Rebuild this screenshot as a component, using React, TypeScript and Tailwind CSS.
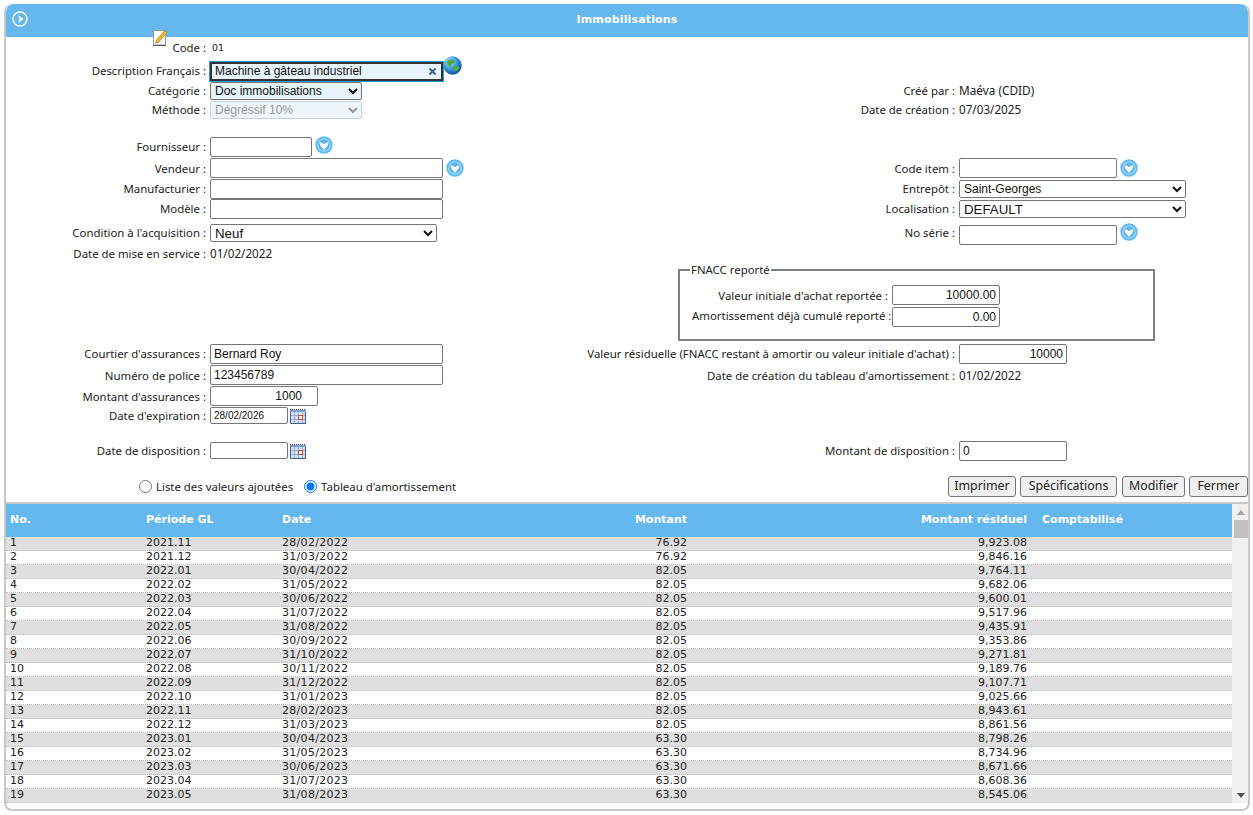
import type { ReactNode } from 'react'

const labelFont = "font-['Noto_Sans',sans-serif]"

const rows = [
  ['2021.11', '28/02/2022', '76.92', '9,923.08'],
  ['2021.12', '31/03/2022', '76.92', '9,846.16'],
  ['2022.01', '30/04/2022', '82.05', '9,764.11'],
  ['2022.02', '31/05/2022', '82.05', '9,682.06'],
  ['2022.03', '30/06/2022', '82.05', '9,600.01'],
  ['2022.04', '31/07/2022', '82.05', '9,517.96'],
  ['2022.05', '31/08/2022', '82.05', '9,435.91'],
  ['2022.06', '30/09/2022', '82.05', '9,353.86'],
  ['2022.07', '31/10/2022', '82.05', '9,271.81'],
  ['2022.08', '30/11/2022', '82.05', '9,189.76'],
  ['2022.09', '31/12/2022', '82.05', '9,107.71'],
  ['2022.10', '31/01/2023', '82.05', '9,025.66'],
  ['2022.11', '28/02/2023', '82.05', '8,943.61'],
  ['2022.12', '31/03/2023', '82.05', '8,861.56'],
  ['2023.01', '30/04/2023', '63.30', '8,798.26'],
  ['2023.02', '31/05/2023', '63.30', '8,734.96'],
  ['2023.03', '30/06/2023', '63.30', '8,671.66'],
  ['2023.04', '31/07/2023', '63.30', '8,608.36'],
  ['2023.05', '31/08/2023', '63.30', '8,545.06'],
]

function DropIcon() {
  return (
    <svg width="18" height="18" viewBox="0 0 18 18" className="shrink-0">
      <circle cx="9" cy="9" r="8.7" fill="#5fb9f2" />
      <circle cx="9" cy="9" r="6.8" fill="#a9dcf9" />
      <circle cx="9" cy="9" r="5.8" fill="#5fb4ea" />
      <path d="M4.5 6 L9 8 L13.5 6 L13 9 L9 14 L5 9 Z" fill="#fff" />
    </svg>
  )
}

function CalendarIcon() {
  return (
    <svg width="16" height="16" viewBox="0 0 16 16" className="shrink-0">
      <rect x="0" y="2" width="16" height="14" fill="#d5e2f4" />
      <path d="M0 1.5 H16" stroke="#444" strokeDasharray="1 1" />
      <rect x="0" y="2" width="16" height="2" fill="#7f9cc9" />
      <path d="M4.5 4 V15 M8.5 4 V15 M12.5 4 V15 M0 7.5 H16 M0 11.5 H16" stroke="#8fb0dc" />
      <rect x="8.5" y="7.5" width="4" height="4" fill="#fff" stroke="#d9482b" />
      <path d="M0.5 4 V15.5 H15.5 V4" fill="none" stroke="#3f5f8f" />
    </svg>
  )
}

function Row({ h, left, right }: { h: string; left?: ReactNode; right?: ReactNode }) {
  return (
    <div className={`flex ${h}`}>
      <div className="flex w-[470px] shrink-0 items-center">{left}</div>
      <div className="flex items-center">{right}</div>
    </div>
  )
}

// low: the label sits one pixel under the middle of its row
function LeftLabel({ children, low }: { children: ReactNode; low?: boolean }) {
  return (
    <span className={`mr-1 w-[200px] shrink-0 text-right whitespace-nowrap ${low ? 'pt-[2px]' : ''}`}>
      {children} :
    </span>
  )
}

function RightLabel({ children, low }: { children: ReactNode; low?: boolean }) {
  return (
    <span className={`mr-1 w-[479px] shrink-0 text-right whitespace-nowrap ${low ? 'pt-[2px]' : ''}`}>
      {children} :
    </span>
  )
}

function TextBox({ w, value, pad }: { w: string; value?: string; pad?: string }) {
  return (
    <input
      readOnly
      value={value ?? ''}
      className={`${w} h-5 shrink-0 rounded-[2px] border border-[#767676] bg-white px-[3px] text-[12px] text-[#111] outline-none font-['Liberation_Sans',sans-serif] ${pad ?? ''}`}
    />
  )
}

function Select({ w, value, tint, big }: { w: string; value: string; tint?: boolean; big?: boolean }) {
  return (
    <select
      value={value}
      onChange={() => {}}
      className={`${w} h-[18px] shrink-0 rounded-[2px] border border-[#767676] text-[#111] font-['Liberation_Sans',sans-serif] ${big ? 'text-[13.3px]' : 'text-[12px]'} ${tint ? 'bg-[#e8f4fc]' : 'bg-white'}`}
    >
      <option>{value}</option>
    </select>
  )
}

function ActionButton({ w, children }: { w: string; children: ReactNode }) {
  return (
    <button className={`${w} h-[21px] rounded-[3px] border border-[#767676] bg-[#efefef] text-[12.4px] text-[#222]`}>
      {children}
    </button>
  )
}

export default function App() {
  return (
    <div className={`h-[815px] overflow-hidden bg-white pt-1 pl-1 text-[11.4px] text-[#222] ${labelFont}`}>
      <div className="h-[807px] w-[1246px] overflow-hidden rounded-[8px] border-2 border-t-0 border-[#c8c8c8]">
        <div className="flex h-[33px] items-center rounded-t-[8px] bg-[#65b8ee] pl-[6px]">
          <svg width="16" height="16" viewBox="0 0 16 16" className="mt-[-3px] shrink-0">
            <circle cx="8" cy="8" r="7" fill="none" stroke="#fff" strokeWidth="1.3" />
            <path d="M6 4 L11.5 8 L6 12 L7.5 8 Z" fill="#fff" />
          </svg>
          <span className="flex-1 pr-[22px] text-center text-[11px] font-bold tracking-[0.15px] text-white font-['DejaVu_Sans',sans-serif]">
            Immobilisations
          </span>
        </div>

        <Row
          h="h-[22px]"
          left={
            <>
              <span className="relative mr-1 w-[200px] shrink-0 text-right">
                <svg width="15" height="16" viewBox="0 0 15 16" className="absolute top-[-9px] left-[147px]">
                  <rect x="0.5" y="0.5" width="12" height="14.5" fill="#fff" stroke="#9a9a9a" />
                  <path d="M0 15.5 H13" stroke="#555" />
                  <path d="M3.5 10 L11.5 0.5 L14 2.5 L5.5 12.5 L2.5 13 Z" fill="#efb92f" stroke="#a67a18" strokeWidth="0.6" />
                </svg>
                Code :
              </span>
              <span className="ml-[2px] text-[9.5px] font-['DejaVu_Sans',sans-serif]">01</span>
            </>
          }
        />
        <Row
          h="h-[23px]"
          left={
            <>
              <LeftLabel>Description Français</LeftLabel>
              <span className="mt-[2px] flex h-[19px] w-[233px] shrink-0 items-center justify-between border-2 border-[#333] bg-[#e8f4fc] pr-[4px] pb-[2px] pl-[3px] text-[12px] text-[#111] outline-1 outline-[#2b9be8] font-['Liberation_Sans',sans-serif]">
                Machine à gâteau industriel
                <svg width="9" height="9" viewBox="0 0 9 9" className="mt-[2px]">
                  <path d="M1.5 1.5 L7.5 7.5 M7.5 1.5 L1.5 7.5" stroke="#3f5f8f" strokeWidth="2" />
                </svg>
              </span>
              <svg width="19" height="19" viewBox="0 0 20 20" className="mb-[10px] shrink-0">
                <defs>
                  <radialGradient id="globe" cx="0.35" cy="0.3" r="0.8">
                    <stop offset="0" stopColor="#bfeaff" />
                    <stop offset="0.45" stopColor="#3d9ee0" />
                    <stop offset="1" stopColor="#0d3f8a" />
                  </radialGradient>
                </defs>
                <circle cx="10" cy="10" r="9.7" fill="url(#globe)" />
                <path d="M4 6 C6 3 10 3 12 5 C13 7 10 8 9 9 C9 11 7 12 6 10 C5 9 4 8 4 6 Z M11 11 C14 10 17 10 17 13 C15 16 13 17 12 16 C12 14 10 13 11 11 Z" fill="#4fae3c" />
              </svg>
            </>
          }
        />
        <Row
          h="h-[18px]"
          left={
            <>
              <LeftLabel>Catégorie</LeftLabel>
              <Select w="w-[152px]" value="Doc immobilisations" tint />
            </>
          }
          right={
            <>
              <RightLabel>Créé par</RightLabel>
              <span className="text-[11.8px]">Maéva (CDID)</span>
            </>
          }
        />
        <Row
          h="h-[20px]"
          left={
            <>
              <LeftLabel>Méthode</LeftLabel>
              <select
                disabled
                className="h-[18px] w-[152px] shrink-0 rounded-[2px] border border-[#c5d3dd] bg-[#eef6fb] text-[12px] text-[#999] font-['Liberation_Sans',sans-serif]"
              >
                <option>Dégréssif 10%</option>
              </select>
            </>
          }
          right={
            <>
              <RightLabel>Date de création</RightLabel>
              <span className="text-[11.7px]">07/03/2025</span>
            </>
          }
        />
        <div className="h-[16px]" />
        <Row
          h="h-[22px]"
          left={
            <>
              <LeftLabel>Fournisseur</LeftLabel>
              <TextBox w="w-[102px]" />
              <span className="mb-[5px] ml-[3px]"><DropIcon /></span>
            </>
          }
        />
        <Row
          h="h-[20px]"
          left={
            <>
              <LeftLabel low>Vendeur</LeftLabel>
              <TextBox w="w-[233px]" />
              <span className="ml-[3px]"><DropIcon /></span>
            </>
          }
          right={
            <>
              <RightLabel low>Code item</RightLabel>
              <TextBox w="w-[158px]" />
              <span className="ml-[3px]"><DropIcon /></span>
            </>
          }
        />
        <Row
          h="h-[21px]"
          left={
            <>
              <LeftLabel>Manufacturier</LeftLabel>
              <TextBox w="w-[233px]" />
            </>
          }
          right={
            <>
              <RightLabel>Entrepôt</RightLabel>
              <Select w="w-[227px]" value="Saint-Georges" />
            </>
          }
        />
        <Row
          h="h-[20px]"
          left={
            <>
              <LeftLabel>Modèle</LeftLabel>
              <TextBox w="w-[233px]" />
            </>
          }
          right={
            <>
              <RightLabel>Localisation</RightLabel>
              <Select w="w-[227px]" value="DEFAULT" big />
            </>
          }
        />
        <Row
          h="h-[27px]"
          left={
            <>
              <LeftLabel>Condition à l'acquisition</LeftLabel>
              <Select w="w-[227px]" value="Neuf" big />
            </>
          }
          right={
            <>
              <RightLabel>No série</RightLabel>
              <TextBox w="mt-[4px] w-[158px]" />
              <span className="mb-[1px] ml-[3px]"><DropIcon /></span>
            </>
          }
        />
        <Row
          h="h-[17px] pb-[2px]"
          left={
            <>
              <LeftLabel>Date de mise en service</LeftLabel>
              <span className="text-[11.7px]">01/02/2022</span>
            </>
          }
        />

        <fieldset className="mt-[-2px] ml-[672px] h-[80px] w-[477px] border-2 border-[#808080] pt-[6px] pl-[12px]">
          <legend className="ml-[-2px] px-[1px] text-[11.4px]">FNACC reporté</legend>
          <div className="flex h-[22px] items-center">
            <span className="mr-1 w-[196px] text-right whitespace-nowrap">Valeur initiale d'achat reportée :</span>
            <TextBox w="w-[108px]" value="10000.00" pad="text-right" />
          </div>
          <div className="flex h-[22px] items-center">
            <span className="mr-1 w-[196px] pb-[3px] text-right whitespace-nowrap">Amortissement déjà cumulé reporté :</span>
            <TextBox w="w-[108px]" value="0.00" pad="text-right" />
          </div>
        </fieldset>

        <div className="h-[2px]" />
        <Row
          h="h-[21px]"
          left={
            <>
              <LeftLabel>Courtier d'assurances</LeftLabel>
              <TextBox w="w-[233px]" value="Bernard Roy" />
            </>
          }
          right={
            <>
              <RightLabel>Valeur résiduelle (FNACC restant à amortir ou valeur initiale d'achat)</RightLabel>
              <TextBox w="w-[108px]" value="10000" pad="text-right" />
            </>
          }
        />
        <Row
          h="h-[21px]"
          left={
            <>
              <LeftLabel low>Numéro de police</LeftLabel>
              <TextBox w="w-[233px]" value="123456789" />
            </>
          }
          right={
            <>
              <RightLabel low>Date de création du tableau d'amortissement</RightLabel>
              <span className="pt-[2px] text-[11.7px]">01/02/2022</span>
            </>
          }
        />
        <Row
          h="h-[21px]"
          left={
            <>
              <LeftLabel low>Montant d'assurances</LeftLabel>
              <TextBox w="w-[108px]" value="1000" pad="pr-[15px] text-right" />
            </>
          }
        />
        <Row
          h="h-[19px]"
          left={
            <>
              <LeftLabel>Date d'expiration</LeftLabel>
              <span className="flex h-[17px] w-[78px] shrink-0 items-center rounded-[2px] border border-[#767676] pl-[3px] text-[10px] text-[#111] font-['Liberation_Sans',sans-serif]">
                28/02/2026
              </span>
              <span className="ml-[2px]"><CalendarIcon /></span>
            </>
          }
        />
        <div className="h-[16px]" />
        <Row
          h="h-[19px]"
          left={
            <>
              <LeftLabel>Date de disposition</LeftLabel>
              <span className="h-[17px] w-[78px] shrink-0 rounded-[2px] border border-[#767676]" />
              <span className="ml-[2px]"><CalendarIcon /></span>
            </>
          }
          right={
            <>
              <RightLabel>Montant de disposition</RightLabel>
              <TextBox w="w-[108px]" value="0" />
            </>
          }
        />
        <div className="h-[15px]" />

        <div className="flex h-[22px] items-center">
          <label className="ml-[133px] flex items-center pt-[2px]">
            <input type="radio" readOnly name="vue" className="mr-[4px] size-[13px]" />
            Liste des valeurs ajoutées
          </label>
          <label className="ml-[11px] flex items-center pt-[2px]">
            <input type="radio" readOnly checked name="vue" className="mr-[4px] size-[13px]" />
            Tableau d'amortissement
          </label>
          <div className="ml-auto flex gap-1">
            <ActionButton w="w-[68px]">Imprimer</ActionButton>
            <ActionButton w="mr-px w-[97px]">Spécifications</ActionButton>
            <ActionButton w="w-[63px]">Modifier</ActionButton>
            <ActionButton w="w-[59px]">Fermer</ActionButton>
          </div>
        </div>

        <div className="mt-[5px] flex h-[303px] border-t-2 border-[#c8c8c8] text-[11px] font-['DejaVu_Sans',sans-serif]">
          <div className="w-[1226px] shrink-0 overflow-hidden">
            <div className="flex h-[33px] items-center bg-[#65b8ee] font-bold text-white">
              <span className="w-[140px] pl-1">No.</span>
              <span className="w-[136px]">Période GL</span>
              <span className="w-[200px]">Date</span>
              <span className="w-[205px] text-right">Montant</span>
              <span className="w-[340px] text-right">Montant résiduel</span>
              <span className="ml-[15px]">Comptabilisé</span>
            </div>
            {rows.map((r, i) => (
              <div
                key={r[0]}
                className={`flex h-[14px] items-center border-b border-dotted border-[#bbb] text-[#222] ${i % 2 === 0 ? 'bg-[#e0e0e0]' : 'bg-white'}`}
              >
                <span className="w-[140px] pl-1">{i + 1}</span>
                <span className="w-[136px]">{r[0]}</span>
                <span className="w-[200px] tracking-[0.3px]">{r[1]}</span>
                <span className="w-[205px] text-right">{r[2]}</span>
                <span className="w-[340px] text-right">{r[3]}</span>
              </div>
            ))}
          </div>
          <div className="flex h-[299px] w-[17px] shrink-0 flex-col items-center bg-[#f1f1f1]">
            <div className="mt-[6px] size-0 border-x-4 border-b-[5px] border-x-transparent border-b-[#a3a3a3]" />
            <div className="mt-[5px] h-[18px] w-[14px] bg-[#c1c1c1]" />
            <div className="mt-auto mb-[5px] size-0 border-x-4 border-t-[5px] border-x-transparent border-t-[#505050]" />
          </div>
        </div>
      </div>
    </div>
  )
}
